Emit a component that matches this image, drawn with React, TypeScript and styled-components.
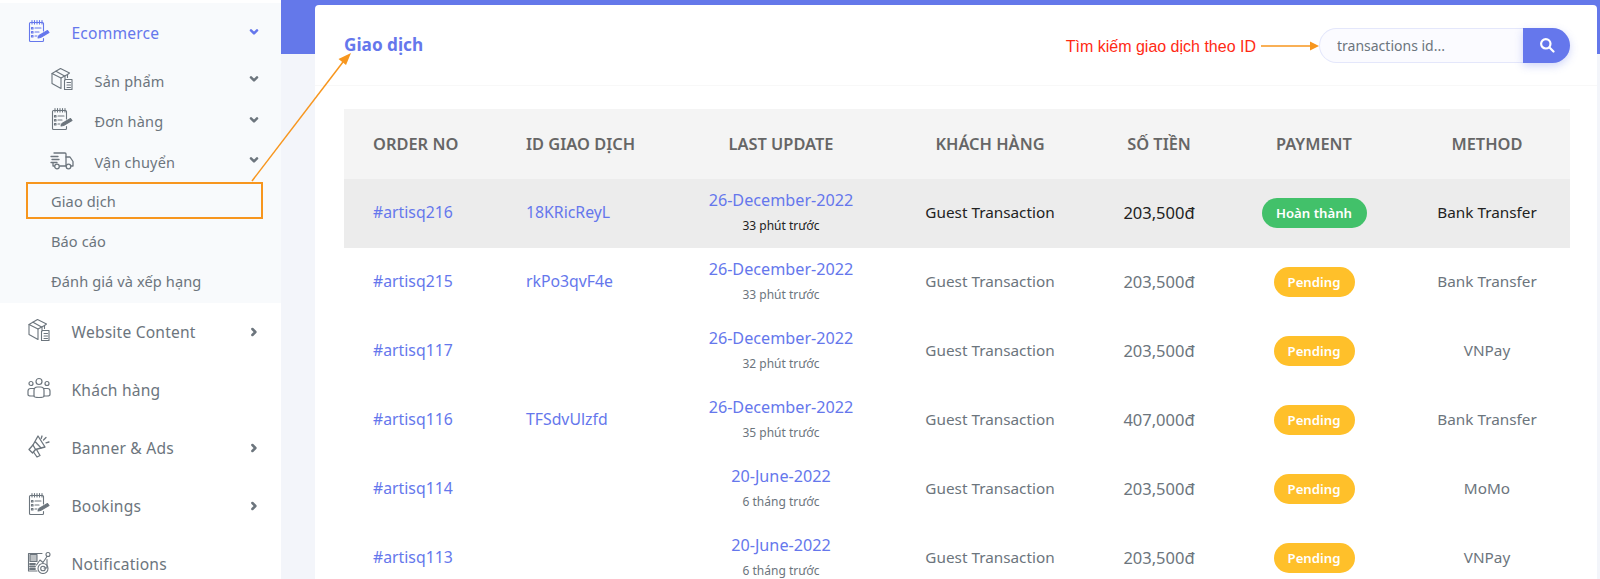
import React from 'react'
import styled, { createGlobalStyle } from 'styled-components'

const primary = '#6577ec'
const orange = '#f7961e'
const FONT = `'Noto Sans', 'Open Sans', sans-serif`

const GlobalStyle = createGlobalStyle`
  html, body {
    margin: 0;
    padding: 0;
    height: 579px;
    overflow: hidden;
    background: #fff;
    font-family: ${FONT};
  }
  * {
    box-sizing: border-box;
  }
`

const Page = styled.div`
  position: relative;
  display: flex;
  width: 1600px;
  height: 579px;
  overflow: hidden;
`

const Sidebar = styled.aside`
  width: 281px;
  flex-shrink: 0;
  padding-top: 3px;
  background: #fff;
`

const OpenGroup = styled.div`
  height: 300px;
  background: #f8fafc;
  padding-top: 3px;
`

const MenuRow = styled.div<{ active?: boolean }>`
  display: flex;
  align-items: center;
  height: ${({ active }) => (active ? '54.5px' : '58px')};
  padding: 0 22px 0 27px;
  color: ${({ active }) => (active ? primary : '#6c757d')};
  font-size: 15.6px;
  letter-spacing: 0.2px;
`

const SubRow = styled.div`
  display: flex;
  align-items: center;
  height: 40.5px;
  padding: 0 22px 0 50px;
  color: #6c757d;
  font-size: 14.5px;
  letter-spacing: 0.2px;
`

const LeafList = styled.div`
  margin-top: -1px;
`

const LeafRow = styled.div`
  position: relative;
  display: flex;
  align-items: center;
  height: 40px;
  padding-left: 51px;
  color: #6c757d;
  font-size: 14.6px;
  letter-spacing: 0.1px;
`

const Highlight = styled.span`
  position: absolute;
  left: 26px;
  top: 1px;
  width: 237px;
  height: 37px;
  border: 2px solid ${orange};
`

const IconSlot = styled.span`
  display: flex;
  width: 24px;
  height: 24px;
  margin-right: 20.5px;
  flex-shrink: 0;
  margin-top: -4px;
`

const RowLabel = styled.span`
  flex: 1;
`

const Chevron = styled.svg<{ right?: boolean }>`
  width: 10px;
  height: 10px;
  margin-bottom: ${({ right }) => (right ? '0' : '3px')};
  flex-shrink: 0;
`

const Main = styled.main`
  flex: 1;
  min-width: 0;
  padding: 5px 3px 0 34px;
  background: linear-gradient(#6478ea 54px, #f3f5fa 54px);
`

const Card = styled.section`
  height: 600px;
  background: #fff;
  border-radius: 4px;
`

const CardHeader = styled.header`
  display: flex;
  align-items: center;
  justify-content: space-between;
  height: 81px;
  padding: 0 27px 0 29px;
  border-bottom: 1px solid #f8f8f8;
`

const Title = styled.h1`
  margin: 0 0 2px;
  color: ${primary};
  font-size: 17.2px;
  font-weight: 700;
`

const SearchArea = styled.div`
  display: flex;
  align-items: center;
`

const Note = styled.span`
  color: #ff2a14;
  font-family: 'Liberation Sans', Arial, sans-serif;
  font-size: 16px;
  margin: 3px 5px 0 0;
`

const NoteArrow = styled.svg`
  width: 58px;
  height: 10px;
  margin-top: 1px;
  flex-shrink: 0;
`

const SearchBox = styled.div`
  display: flex;
  width: 251px;
  height: 35px;
`

const SearchInput = styled.input`
  flex: 1;
  min-width: 0;
  padding: 0 17px;
  border: 1px solid #e4e7fb;
  border-right: none;
  border-radius: 18px 0 0 18px;
  background: #fbfbff;
  color: #6c757d;
  font-family: ${FONT};
  font-size: 14px;
  outline: none;
  &::placeholder {
    color: #6c757d;
    opacity: 1;
  }
`

const SearchButton = styled.button`
  display: flex;
  align-items: center;
  justify-content: center;
  width: 47px;
  border: none;
  padding: 0;
  border-radius: 0 18px 18px 0;
  background: ${primary};
  box-shadow: 0 3px 8px rgba(101, 119, 236, 0.3);
`

const TableWrap = styled.div`
  padding: 23px 27px 0 29px;
`

const Table = styled.table`
  width: 1226px;
  table-layout: fixed;
  border-collapse: collapse;
`

const HeadCell = styled.th<{ w: number; left?: boolean }>`
  width: ${({ w }) => w}px;
  height: 70px;
  padding: 0 0 2px ${({ left }) => (left ? '29px' : '0')};
  background: #f4f4f4;
  color: #666;
  font-size: 16.4px;
  font-weight: 600;
  text-align: ${({ left }) => (left ? 'left' : 'center')};
`

const Row = styled.tr<{ selected?: boolean }>`
  height: 69px;
  background: ${({ selected }) => (selected ? '#ececec' : '#fff')};
  color: ${({ selected }) => (selected ? '#222' : '#6c757d')};
`

const Cell = styled.td<{ left?: boolean; size?: number }>`
  padding: 0 0 3px ${({ left }) => (left ? '29px' : '0')};
  font-size: ${({ size }) => size || 15.3}px;
  text-align: ${({ left }) => (left ? 'left' : 'center')};
`

const BadgeCell = styled.td`
  padding: 0 0 1px;
  text-align: center;
`

const LinkText = styled.span`
  color: ${primary};
`

const DateText = styled.div`
  color: ${primary};
  font-size: 16.2px;
  line-height: 22px;
`

const AgoText = styled.div`
  font-size: 12px;
  line-height: 20px;
  margin-top: 5px;
`

const Badge = styled.span<{ done?: boolean }>`
  display: inline-flex;
  align-items: center;
  justify-content: center;
  vertical-align: middle;
  width: ${({ done }) => (done ? '105px' : '81px')};
  height: 30px;
  border-radius: 15px;
  background: ${({ done }) => (done ? '#42c16a' : '#ffc02a')};
  color: #fff;
  font-size: 13.2px;
  font-weight: 600;
`

const Overlay = styled.svg`
  position: absolute;
  left: 0;
  top: 0;
  pointer-events: none;
`

const iconProps = {
  width: 24,
  height: 24,
  viewBox: '0 0 24 24',
  fill: 'none',
  stroke: 'currentColor',
  strokeWidth: 1.1,
  strokeLinecap: 'round' as const,
  strokeLinejoin: 'round' as const,
}

function NotepadIcon() {
  return (
    <svg {...iconProps}>
      <path d="M16.5 12V4.5a1 1 0 0 0-1-1H3.5a1 1 0 0 0-1 1v17a1 1 0 0 0 1 1h12a1 1 0 0 0 1-1v-2" />
      <path d="M5 1.5v3.5M7.5 1.5v3.5M10 1.5v3.5M12.5 1.5v3.5M15 1.5v3.5" />
      <path d="M4.5 8.5h1.5v1.5h-1.5zM4.5 12.5h1.5v1.5h-1.5zM4.5 16.5h1.5v1.5h-1.5z" />
      <path d="M8 9h6M8 13h4M8 17h2" />
      <path d="M11 19l1-2.5 8.5-5 1.5 2-8.5 5z" fill="currentColor" />
    </svg>
  )
}

function BoxDocIcon() {
  return (
    <svg {...iconProps}>
      <path d="M10.5 1.5l9 4.5-2 1.5v3M10.5 1.5L2 6.5l9 4.5 6.5-3.5" />
      <path d="M2 6.5v10l9 5v-10.500" />
      <path d="M6 4.200l9 5v3" />
      <path d="M15.500 12.500h6.500v10h-7.500v-9z" />
      <path d="M17 15.500h3.500M17 18h3.500M17 20.500h3.500" />
    </svg>
  )
}

function TruckIcon() {
  return (
    <svg {...iconProps} strokeWidth={1.3}>
      <path d="M4 5h11a1 1 0 0 1 1 1v12h-6M4 18h-1v-3" />
      <path d="M16 9h4l3 4.500V18h-2" />
      <path d="M1 8.500h7M2 11.500h7M1 14.500h6" />
      <circle cx="7" cy="18.500" r="2.300" />
      <circle cx="18.500" cy="18.500" r="2.300" />
    </svg>
  )
}

function PeopleIcon() {
  return (
    <svg {...iconProps} strokeWidth={1.2}>
      <circle cx="12" cy="5.500" r="3" />
      <circle cx="4" cy="7.500" r="2" />
      <circle cx="20" cy="7.500" r="2" />
      <path d="M7 20v-5.500a3.500 3.500 0 0 1 3.500-3.500h3a3.500 3.500 0 0 1 3.500 3.500V20c0 1-2 1.500-5 1.500S7 21 7 20z" />
      <path d="M7 12.500H3.500A2.500 2.500 0 0 0 1 15v3.500c0 1 1.500 1.500 3 1.500h3M17 12.500h3.500A2.500 2.500 0 0 1 23 15v3.500c0 1-1.500 1.500-3 1.500h-3" />
    </svg>
  )
}

function MegaphoneIcon() {
  return (
    <svg {...iconProps} strokeWidth={1.3}>
      <path d="M11 2l7 11-9.500 2.500L6 11z" />
      <path d="M6 11l-4 4.500 3.500 3.500 3-3.500" />
      <path d="M6.500 18l3.500 5 3-1.500-3.500-6" />
      <path d="M8.500 8l5.500 6" />
      <path d="M15 2l-.8 2.500M19 3.500l-2.500 2.500M22 8l-3 .8" />
    </svg>
  )
}

function ChartGearIcon() {
  return (
    <svg {...iconProps}>
      <path d="M20 9.500V18h-3M10 21H1.500V3.500H15" />
      <path d="M3 4.500h7v7H3z" fill="currentColor" fillOpacity={0.45} />
      <path d="M3 14h5M3 16.500h5M3 19h5" strokeWidth={1.8} />
      <path d="M9.500 15l3.500-5 3 2.500 4-6" />
      <circle cx="21" cy="4.500" r="2" />
      <circle cx="16" cy="18.500" r="5" />
      <circle cx="16" cy="18.500" r="2.300" />
    </svg>
  )
}

function ChevronIcon({ right, color }: { right?: boolean; color?: string }) {
  return (
    <Chevron viewBox="0 0 10 10" fill="none" right={right}>
      <path
        d={right ? 'M3.400 2L6.400 5 3.400 8' : 'M2 3.400L5 6.400l3-3'}
        stroke={color || '#6c757d'}
        strokeWidth={2.500}
        strokeLinecap="round"
        strokeLinejoin="round"
      />
    </Chevron>
  )
}

const rows = [
  { no: '#artisq216', tx: '18KRicReyL', date: '26-December-2022', ago: '33 phút trước', amount: '203,500đ', done: true, method: 'Bank Transfer' },
  { no: '#artisq215', tx: 'rkPo3qvF4e', date: '26-December-2022', ago: '33 phút trước', amount: '203,500đ', method: 'Bank Transfer' },
  { no: '#artisq117', tx: '', date: '26-December-2022', ago: '32 phút trước', amount: '203,500đ', method: 'VNPay' },
  { no: '#artisq116', tx: 'TFSdvUlzfd', date: '26-December-2022', ago: '35 phút trước', amount: '407,000đ', method: 'Bank Transfer' },
  { no: '#artisq114', tx: '', date: '20-June-2022', ago: '6 tháng trước', amount: '203,500đ', method: 'MoMo' },
  { no: '#artisq113', tx: '', date: '20-June-2022', ago: '6 tháng trước', amount: '203,500đ', method: 'VNPay' },
]

export default function App() {
  return (
    <Page>
      <GlobalStyle />
      <Sidebar>
        <OpenGroup>
          <MenuRow active>
            <IconSlot><NotepadIcon /></IconSlot>
            <RowLabel>Ecommerce</RowLabel>
            <ChevronIcon color={primary} />
          </MenuRow>
          <SubRow>
            <IconSlot><BoxDocIcon /></IconSlot>
            <RowLabel>Sản phẩm</RowLabel>
            <ChevronIcon />
          </SubRow>
          <SubRow>
            <IconSlot><NotepadIcon /></IconSlot>
            <RowLabel>Đơn hàng</RowLabel>
            <ChevronIcon />
          </SubRow>
          <SubRow>
            <IconSlot><TruckIcon /></IconSlot>
            <RowLabel>Vận chuyển</RowLabel>
            <ChevronIcon />
          </SubRow>
          <LeafList>
            <LeafRow>
              <Highlight />
              Giao dịch
            </LeafRow>
            <LeafRow>Báo cáo</LeafRow>
            <LeafRow>Đánh giá và xếp hạng</LeafRow>
          </LeafList>
        </OpenGroup>
        <MenuRow>
          <IconSlot><BoxDocIcon /></IconSlot>
          <RowLabel>Website Content</RowLabel>
          <ChevronIcon right />
        </MenuRow>
        <MenuRow>
          <IconSlot><PeopleIcon /></IconSlot>
          <RowLabel>Khách hàng</RowLabel>
        </MenuRow>
        <MenuRow>
          <IconSlot><MegaphoneIcon /></IconSlot>
          <RowLabel>Banner &amp; Ads</RowLabel>
          <ChevronIcon right />
        </MenuRow>
        <MenuRow>
          <IconSlot><NotepadIcon /></IconSlot>
          <RowLabel>Bookings</RowLabel>
          <ChevronIcon right />
        </MenuRow>
        <MenuRow>
          <IconSlot><ChartGearIcon /></IconSlot>
          <RowLabel>Notifications</RowLabel>
        </MenuRow>
      </Sidebar>
      <Main>
        <Card>
          <CardHeader>
            <Title>Giao dịch</Title>
            <SearchArea>
              <Note>Tìm kiếm giao dịch theo ID</Note>
              <NoteArrow viewBox="0 0 58 10">
                <path d="M0 5h50" stroke={orange} strokeWidth={1.500} />
                <path d="M49 0.500l9 4.500-9 4.500z" fill={orange} />
              </NoteArrow>
              <SearchBox>
                <SearchInput placeholder="transactions id..." readOnly />
                <SearchButton aria-label="search">
                  <svg width="16" height="16" viewBox="0 0 16 16" fill="none" stroke="#fff" strokeWidth={2.200} strokeLinecap="round">
                    <circle cx="6.800" cy="6.800" r="4.700" />
                    <path d="M10.500 10.500l4 4" />
                  </svg>
                </SearchButton>
              </SearchBox>
            </SearchArea>
          </CardHeader>
          <TableWrap>
            <Table>
              <thead>
                <tr>
                  <HeadCell w={153} left>ORDER NO</HeadCell>
                  <HeadCell w={179} left>ID GIAO DỊCH</HeadCell>
                  <HeadCell w={210}>LAST UPDATE</HeadCell>
                  <HeadCell w={208}>KHÁCH HÀNG</HeadCell>
                  <HeadCell w={130}>SỐ TIỀN</HeadCell>
                  <HeadCell w={180}>PAYMENT</HeadCell>
                  <HeadCell w={166}>METHOD</HeadCell>
                </tr>
              </thead>
              <tbody>
                {rows.map((r, i) => (
                  <Row key={r.no} selected={i === 0}>
                    <Cell left size={15.8}><LinkText>{r.no}</LinkText></Cell>
                    <Cell left size={15.8}><LinkText>{r.tx}</LinkText></Cell>
                    <Cell>
                      <DateText>{r.date}</DateText>
                      <AgoText>{r.ago}</AgoText>
                    </Cell>
                    <Cell>Guest Transaction</Cell>
                    <Cell size={16.5}>{r.amount}</Cell>
                    <BadgeCell><Badge done={r.done}>{r.done ? 'Hoàn thành' : 'Pending'}</Badge></BadgeCell>
                    <Cell>{r.method}</Cell>
                  </Row>
                ))}
              </tbody>
            </Table>
          </TableWrap>
        </Card>
      </Main>
      <Overlay width="1600" height="579" viewBox="0 0 1600 579">
        <path d="M252 181L343 62" stroke={orange} strokeWidth={1.500} />
        <path d="M351 53l-12.500 6 7.500 6z" fill={orange} />
      </Overlay>
    </Page>
  )
}
